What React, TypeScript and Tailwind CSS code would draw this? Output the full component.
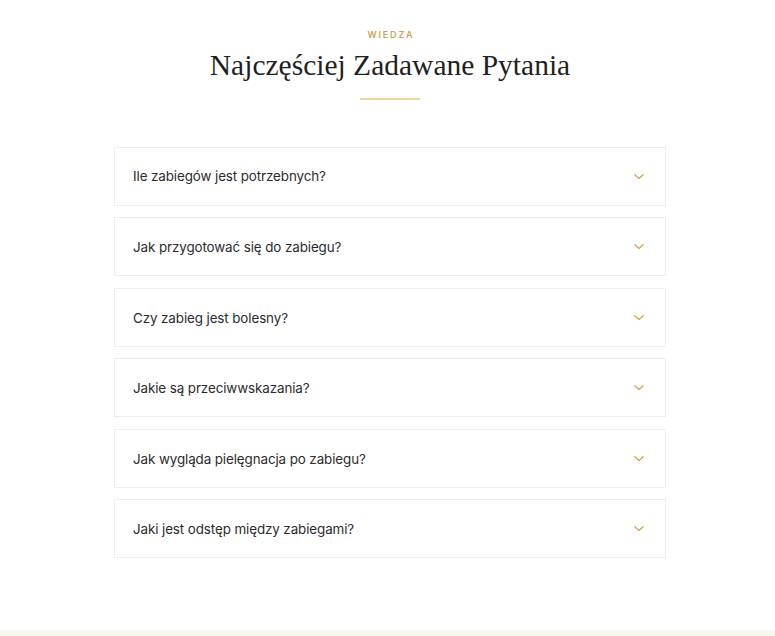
import React from "react";

const items = [
  "Ile zabiegów jest potrzebnych?",
  "Jak przygotować się do zabiegu?",
  "Czy zabieg jest bolesny?",
  "Jakie są przeciwwskazania?",
  "Jak wygląda pielęgnacja po zabiegu?",
  "Jaki jest odstęp między zabiegami?",
];

function Chevron() {
  return (
    <svg width="12" height="12" viewBox="0 0 12 12" fill="none">
      <path d="M1.8 3.8L6 7.6L10.2 3.8" stroke="#d2a74e" strokeWidth="1.3" strokeLinecap="round" strokeLinejoin="round" />
    </svg>
  );
}

export default function App() {
  return (
    <div className="w-[775px] h-[636px] bg-white flex flex-col overflow-hidden" style={{ fontFamily: "Inter, 'Noto Sans', sans-serif" }}>
      <div className="flex-1 flex flex-col items-center pl-[5px]">
        <div className="mt-[29px] text-[9px] leading-[11px] tracking-[0.2em] font-semibold text-[#c9a55a] pl-[2px]">WIEDZA</div>
        <h2 className="mt-[7px] text-[29.5px] leading-[36px] text-[#1f1f24]" style={{ fontFamily: "'Liberation Serif', 'DejaVu Serif', serif" }}>
          Najczęściej Zadawane Pytania
        </h2>
        <div className="mt-[15px] w-[60px] h-[1.5px] bg-[#ecd6a0]" />
        <div className="mt-[47px] w-[552px] flex flex-col gap-[11.6px]">
          {items.map((q) => (
            <div key={q} className="h-[59px] border border-[#f1eee8] bg-white flex items-center justify-between pl-[18px] pr-[20px] pt-[1px]">
              <span className="text-[13.4px] text-[#2b2b2e] tracking-[-0.1px]">{q}</span>
              <Chevron />
            </div>
          ))}
        </div>
      </div>
      <div className="h-[6px] bg-[#f8f6f1]" />
    </div>
  );
}
